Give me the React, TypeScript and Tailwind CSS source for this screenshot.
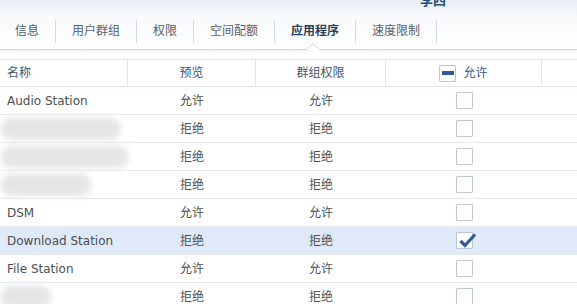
import React from "react";

type Row = { name: string; blur?: number; preview: string; group: string; checked?: boolean; hl?: boolean };

const rows: Row[] = [
  { name: "Audio Station", preview: "允许", group: "允许" },
  { name: "", blur: 120, preview: "拒绝", group: "拒绝" },
  { name: "", blur: 130, preview: "拒绝", group: "拒绝" },
  { name: "", blur: 90, preview: "拒绝", group: "拒绝" },
  { name: "DSM", preview: "允许", group: "允许" },
  { name: "Download Station", preview: "拒绝", group: "拒绝", checked: true, hl: true },
  { name: "File Station", preview: "允许", group: "允许" },
  { name: "", blur: 50, preview: "拒绝", group: "拒绝" },
];

const tabs = ["信息", "用户群组", "权限", "空间配额", "应用程序", "速度限制"];

function Checkbox({ checked }: { checked?: boolean }) {
  return (
    <div className="relative w-[17px] h-[17px] border border-[#bec7d2] bg-white rounded-[1px]">
      {checked && (
        <svg className="absolute left-[1px] top-[-3px]" width="20" height="20" viewBox="0 0 20 20">
          <path d="M2.5 11 L7 15.5 L17 4.5" fill="none" stroke="#2d5b92" strokeWidth="3.2" strokeLinejoin="miter" />
        </svg>
      )}
    </div>
  );
}

export default function App() {
  return (
    <div className="w-[577px] h-[304px] overflow-hidden bg-white font-['DejaVu_Sans','Noto_Sans_CJK_SC',sans-serif] text-[12px] text-[#4b4f55]">
      <div className="h-[16px] flex items-start bg-gradient-to-b from-[#e8edf3] to-[#f7f9fb] pl-[420px]">
        <div className="mt-[-6px] leading-[14px] text-[13px] font-bold text-[#2d4e7a]">李四</div>
      </div>
      <div className="relative h-[34px] bg-gradient-to-b from-[#f7f9fb] to-white flex items-start ml-[-1px] border-b border-[#d2d6db] shadow-[0_1px_2px_rgba(0,0,0,0.08)]">
        {tabs.map((t, i) => (
          <div key={t} className="flex items-start">
            <div
              className={
                "h-[23px] mt-[4px] px-4 leading-[23px] " +
                (i === 4 ? "font-bold text-[#2b3f58]" : "text-[#56606c]")
              }
            >
              {t}
            </div>
            <div className="w-px h-[23px] mt-[4px] bg-[#d3dce6]" />
          </div>
        ))}
        <svg className="absolute left-[306px] top-[27px]" width="16" height="8" viewBox="0 0 16 8">
          <polygon points="0,8 8,0 16,8" fill="#ffffff" />
          <polyline points="0,7.5 8,0.5 16,7.5" fill="none" stroke="#d2d6db" strokeWidth="1" />
        </svg>
      </div>
      <div className="h-[9px]" />
      <div className="grid grid-cols-[128px_128px_130px_156px_1fr] h-[28px] border-y border-[#dde5ee] text-[#3f556c]">
        <div className="border-r border-[#dde6f0] pl-[7px] flex items-center">名称</div>
        <div className="border-r border-[#dde6f0] flex items-center justify-center">预览</div>
        <div className="border-r border-[#dde6f0] flex items-center justify-center">群组权限</div>
        <div className="border-r border-[#dde6f0] flex items-center justify-center gap-[7px]">
          <div className="w-[17px] h-[17px] border border-[#bec7d2] bg-white rounded-[1px] flex items-center justify-center">
            <div className="w-[12px] h-[4px] bg-[#2f5d93]" />
          </div>
          <span className="text-[#3b5a80]">允许</span>
        </div>
        <div />
      </div>
      {rows.map((r, i) => (
        <div
          key={i}
          className={
            "grid grid-cols-[128px_128px_130px_156px_1fr] h-[28px] border-b border-[#e7ebf0] " +
            (r.hl ? "bg-[#dfe9f7]" : "bg-white")
          }
        >
          <div className="pl-[7px] flex items-center relative">
            {r.blur ? (
              <div
                className="h-[22px] rounded-[10px] bg-[#e4e5e6] blur-[3px] ml-[-6px]"
                style={{ width: r.blur }}
              />
            ) : (
              r.name
            )}
          </div>
          <div className="flex items-center justify-center">{r.preview}</div>
          <div className="flex items-center justify-center">{r.group}</div>
          <div className="flex items-center justify-center">
            <Checkbox checked={r.checked} />
          </div>
          <div />
        </div>
      ))}
    </div>
  );
}
